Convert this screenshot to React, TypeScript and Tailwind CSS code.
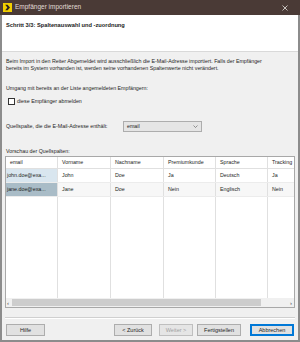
import React from "react";

const cols = [
  { h: "email", w: 52 },
  { h: "Vorname", w: 53 },
  { h: "Nachname", w: 53 },
  { h: "Premiumkunde", w: 52 },
  { h: "Sprache", w: 52 },
  { h: "Tracking", w: 52 },
];

const rows = [
  ["john.doe@example.com", "John", "Doe", "Ja", "Deutsch", "Ja"],
  ["jane.doe@example.com", "Jane", "Doe", "Nein", "Englisch", "Nein"],
];

function Btn({ label, w, disabled, focus }: { label: string; w: number; disabled?: boolean; focus?: boolean }) {
  return (
    <div
      className={
        "h-[12px] flex items-center justify-center text-[5.5px] " +
        (focus
          ? "border border-[#0078d7] bg-[#e1e1e1] outline outline-1 outline-[#0078d7] outline-offset-[-2px] text-[#1e1e1e]"
          : disabled
          ? "border border-[#bfbfbf] bg-[#e5e5e5] text-[#a0a0a0]"
          : "border border-[#adadad] bg-[#e1e1e1] text-[#1e1e1e]")
      }
      style={{ width: w }}
    >
      {label}
    </div>
  );
}

export default function App() {
  return (
    <div className="w-[300px] h-[342px] flex flex-col bg-[#8c8c8c] font-['Liberation_Sans',Arial,sans-serif] text-[#1e1e1e] overflow-hidden">
      {/* title bar */}
      <div className="h-[15px] shrink-0 bg-[#4a3a36] flex items-center pl-[3px] pr-[12px]">
        <svg width="9" height="9" viewBox="0 0 9 9">
          <rect width="9" height="9" fill="#f2cf00" />
          <path d="M2.2 1.8 H4.6 L7 4.5 L4.6 7.2 H2.2 L4.4 4.5 Z" fill="#2a2320" />
        </svg>
        <span className="ml-[3px] text-[6.5px] text-[#e3dcd8] leading-none">Empfänger importieren</span>
        <span className="ml-auto">
          <svg width="6" height="6" viewBox="0 0 6 6">
            <path d="M0.5 0.5 L5.5 5.5 M5.5 0.5 L0.5 5.5" stroke="#d6d0cd" strokeWidth="0.9" />
          </svg>
        </span>
      </div>
      <div className="flex-1 flex flex-col mx-[2px] mb-[2px] bg-[#f0f0f0]">
        {/* header */}
        <div className="h-[37px] shrink-0 bg-white border-b border-[#d9d9d9] pl-[4px] pt-[7px]">
          <div className="text-[5.7px] font-bold leading-[7px] text-[#1a1a1a]">Schritt 3/3: Spaltenauswahl und -zuordnung</div>
        </div>
        <div className="flex-1 flex flex-col px-[3px]">
          <div className="mt-[6px] pl-[1px] text-[5.3px] leading-[7px]">
            <div>Beim Import in den Reiter Abgemeldet wird ausschließlich die E-Mail-Adresse importiert. Falls der Empfänger</div>
            <div>bereits im System vorhanden ist, werden seine vorhandenen Spaltenwerte nicht verändert.</div>
          </div>
          <div className="mt-[13px] pl-[1px] text-[5.3px] leading-[7px]">Umgang mit bereits an der Liste angemeldeten Empfängern:</div>
          <div className="mt-[6px] pl-[3px] flex items-center h-[7px]">
            <div className="w-[7px] h-[7px] border border-[#333] bg-white" />
            <span className="ml-[2px] text-[5.3px] leading-[7px]">diese Empfänger abmelden</span>
          </div>
          <div className="mt-[16px] pl-[1px] flex items-center h-[11px]">
            <span className="text-[5.3px] leading-[7px] w-[117px]">Quellspalte, die die E-Mail-Adresse enthält:</span>
            <div className="w-[79px] h-[11px] border border-[#adadad] bg-[#e5e5e5] flex items-center pl-[3px] pr-[3px]">
              <span className="text-[5.3px] leading-none">email</span>
              <svg className="ml-auto" width="5" height="3" viewBox="0 0 5 3">
                <path d="M0.5 0.5 L2.5 2.5 L4.5 0.5" stroke="#555" strokeWidth="0.6" fill="none" />
              </svg>
            </div>
          </div>
          <div className="mt-[16px] pl-[1px] text-[5.3px] leading-[7px]">Vorschau der Quellspalten:</div>
          {/* table */}
          <div className="mt-[1px] h-[152px] border border-[#a8a8a8] bg-white flex flex-col overflow-hidden">
            <div className="flex-1 overflow-hidden">
              <div className="flex h-[12px] border-b border-[#e0e0e0]">
                {cols.map((c, i) => (
                  <div
                    key={i}
                    className="shrink-0 border-r border-[#e0e0e0] flex items-center pl-[4px] text-[5.3px]"
                    style={{ width: c.w }}
                  >
                    {c.h}
                  </div>
                ))}
              </div>
              {rows.map((r, ri) => (
                <div key={ri} className="flex h-[14px] border-b border-[#ececec]">
                  {r.map((v, ci) => (
                    <div
                      key={ci}
                      className={
                        "shrink-0 border-r border-[#e0e0e0] flex items-center text-[5.3px] overflow-hidden whitespace-nowrap " +
                        (ci === 0
                          ? ri === 0
                            ? "bg-[#d9e6ef] pl-[1px]"
                            : "bg-[#a9bcc7] pl-[1px]"
                          : ri === 1
                          ? "bg-[#f7f7f7] pl-[4px]"
                          : "pl-[4px]")
                      }
                      style={{ width: cols[ci].w }}
                    >
                      {ci === 0 ? v.slice(0, 12) + "..." : v}
                    </div>
                  ))}
                </div>
              ))}
              <div className="flex h-full">
                {cols.map((c, i) => (
                  <div key={i} className="shrink-0 border-r border-[#e0e0e0]" style={{ width: c.w }} />
                ))}
              </div>
            </div>
            <div className="h-[9px] shrink-0 flex bg-[#f0f0f0] items-center">
              <div className="w-[6px] text-[6px] leading-none pl-[1px] text-[#444]">‹</div>
              <div className="w-[249px] h-[7px] bg-[#cdcdcd]" />
              <div className="flex-1 flex justify-end pr-[2px] text-[6px] leading-none text-[#444]">›</div>
            </div>
          </div>
          <div className="mt-[9px] h-[2px] border-t border-[#d0d0d0] border-b border-b-white" />
          <div className="mt-[5px] flex items-center pl-[1px]">
            <Btn label="Hilfe" w={39} />
            <div className="ml-[69px]"><Btn label="< Zurück" w={38} /></div>
            <div className="ml-[7px]"><Btn label="Weiter >" w={34} disabled /></div>
            <div className="ml-[4px]"><Btn label="Fertigstellen" w={44} /></div>
            <div className="ml-[9px]"><Btn label="Abbrechen" w={44} focus /></div>
          </div>
        </div>
      </div>
    </div>
  );
}
